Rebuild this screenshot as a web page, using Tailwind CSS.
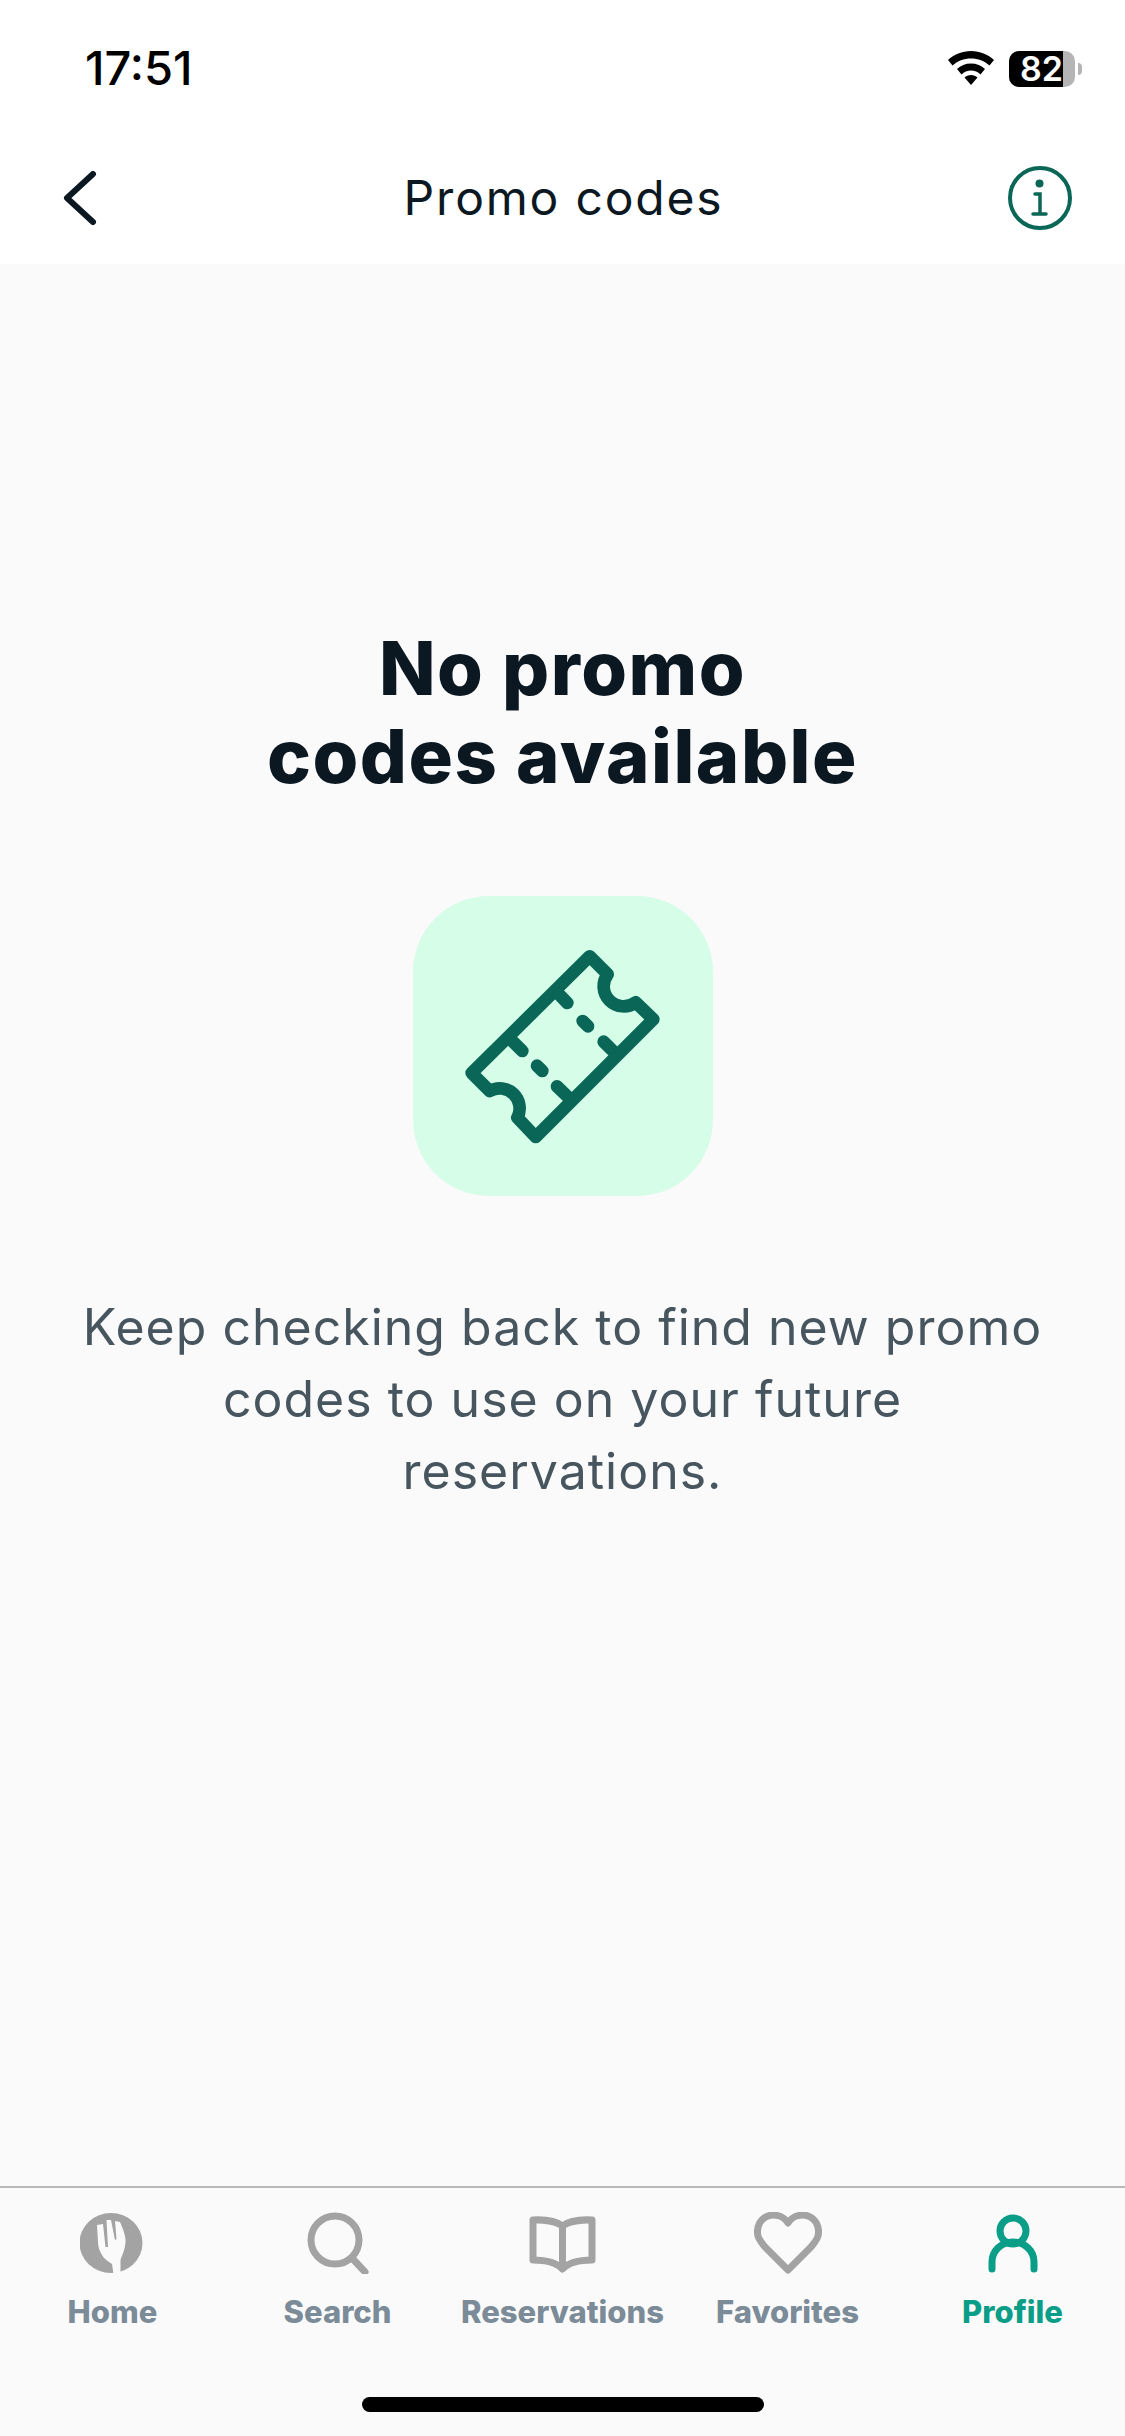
<!DOCTYPE html>
<html><head><meta charset="utf-8"><script src="https://cdn.jsdelivr.net/npm/@tailwindcss/browser@4"></script></head>
<body class="m-0">
<div class="w-[1125px] h-[2436px] flex flex-col bg-[#fafafa] font-['Inter',sans-serif] overflow-hidden">
  <div class="bg-white h-[264px] shrink-0 flex flex-col">
    <div class="h-[132px] pl-[85px] pr-[43px] flex items-start justify-between">
      <span class="mt-[41px] text-[47px] leading-[54px] font-medium text-black">17:51</span>
      <div class="mt-[51px] flex items-start gap-[15px]">
        <svg class="w-[46px] h-[34px]" viewBox="0 0 46 34"><path d="M23 0C14 0 6 3.500 0 9l4.500 5.500C9.500 10 16 7.500 23 7.500S36.500 10 41.500 14.500L46 9C40 3.500 32 0 23 0z M23 12.500c-5.500 0-10.500 2-14 5.500l4.500 5.500c2.500-2.500 6-4 9.500-4s7 1.500 9.500 4L37 18c-3.500-3.500-8.500-5.500-14-5.500z M23 24c-2.500 0-4.800 1-6.500 2.500L23 34l6.500-7.500C27.800 25 25.500 24 23 24z" fill="#000"/></svg>
        <div class="relative w-[73px] h-[36px]">
          <div class="w-[66px] h-[36px] rounded-[10px] bg-[#b5b5b5]">
            <div class="w-[54px] h-[36px] rounded-l-[10px] bg-black text-white text-[34px] leading-[36px] font-semibold text-right whitespace-nowrap">82</div>
          </div>
          <div class="absolute left-[69px] top-[12px] w-[4px] h-[12px] rounded-r-full bg-[#b5b5b5]"></div>
        </div>
      </div>
    </div>
    <div class="h-[132px] pl-[63px] pr-[53px] flex items-center justify-between">
      <div class="w-[66px]">
        <svg class="w-[34px] h-[54px]" viewBox="0 0 34 54"><path d="M30 3L4 27l26 24" fill="none" stroke="#0b1822" stroke-width="6" stroke-linecap="round" stroke-linejoin="round"/></svg>
      </div>
      <span class="-ml-[10px] text-[48px] leading-[60px] font-normal text-[#0b1822] tracking-[1.800px]">Promo codes</span>
      <svg class="w-[64px] h-[64px]" viewBox="0 0 64 64"><circle cx="32" cy="32" r="30" fill="none" stroke="#0a6657" stroke-width="4"/><circle cx="31.500" cy="17.500" r="4" fill="#0a6657"/><path d="M27 28h5v20M25 48h13" fill="none" stroke="#0a6657" stroke-width="3.500" stroke-linecap="round"/></svg>
    </div>
  </div>

  <main class="flex-1 flex flex-col items-center">
    <h1 class="mt-[360px] text-center text-[74px] leading-[88px] font-extrabold text-[#0b1822] tracking-[1.500px]">No promo<br>codes available</h1>
    <div class="mt-[96px] w-[300px] h-[300px] rounded-[76px] bg-[#d6fde8]">
      <svg class="w-full h-full" viewBox="40 47 900 900">
        <g fill="none" stroke="#0a6657" stroke-width="38" stroke-linecap="round" stroke-linejoin="round">
          <path d="M570 228L624 282A60 60 0 0 0 708 366L761 417L408 770L353 712A60 60 0 0 0 270 632L216 578Z"/>
          <path d="M476 340L503 368M340 484L368 512M612 484L640 512M472 618L505 650M549 422L565 438M412 556L428 572"/>
        </g>
      </svg>
    </div>
    <p class="mt-[95px] w-[1040px] text-center text-[50px] leading-[72px] font-normal text-[#47555f] tracking-[1px]">Keep checking back to find new promo<br>codes to use on your future<br>reservations.</p>
  </main>

  <nav class="h-[250px] shrink-0 border-t-2 border-[#b9b9b9] relative">
    <div class="grid grid-cols-5 pt-[24px]">
      <div class="flex flex-col items-center">
        <svg class="w-[66px] h-[62px]" viewBox="0 0 66 62"><ellipse cx="31" cy="31" rx="31.500" ry="30" fill="#a3a3a3"/><path d="M17 13L23 12L25.500 35L28 35L26.500 8L31 8L35 28L36.500 27L35 9L40 10C43 17 46 24 45.500 30C45 38 42 43 40.500 48L40.500 62L33.500 62L32 52C28 49 24 47 22 43C19 38 18 34 18 30Z" fill="#fafafa"/></svg>
        <span class="mt-[18px] text-[31px] leading-[40px] font-extrabold text-[#7b8b98]">Home</span>
      </div>
      <div class="flex flex-col items-center">
        <svg class="w-[62px] h-[62px]" viewBox="0 0 62 62"><circle cx="28" cy="28" r="24" fill="none" stroke="#a3a3a3" stroke-width="7"/><path d="M45 46l13 14" stroke="#a3a3a3" stroke-width="7" stroke-linecap="round"/></svg>
        <span class="mt-[18px] text-[31px] leading-[40px] font-extrabold text-[#7b8b98]">Search</span>
      </div>
      <div class="flex flex-col items-center">
        <svg class="w-[68px] h-[62px]" viewBox="0 0 68 62"><path d="M33.500 14C27 9 14 7.500 4 8V48C14 48 27 50 33.500 57C40 50 53 48 63 48V8C53 7.500 40 9 33.500 14ZM33.500 14V57" fill="none" stroke="#a3a3a3" stroke-width="7" stroke-linejoin="round"/></svg>
        <span class="mt-[18px] text-[31px] leading-[40px] font-extrabold text-[#7b8b98] whitespace-nowrap">Reservations</span>
      </div>
      <div class="flex flex-col items-center">
        <svg class="w-[68px] h-[62px]" viewBox="0 0 68 62"><path d="M34 11C29 3 20 2 14 4C6 7 2 15 4 24C5 28 8 31 11 35L34 58L57 35C60 31 63 28 64 24C66 15 62 7 54 4C48 2 39 3 34 11Z" fill="none" stroke="#a3a3a3" stroke-width="7" stroke-linejoin="round"/></svg>
        <span class="mt-[18px] text-[31px] leading-[40px] font-extrabold text-[#7b8b98]">Favorites</span>
      </div>
      <div class="flex flex-col items-center">
        <svg class="w-[54px] h-[62px]" viewBox="0 0 54 62"><circle cx="27" cy="19" r="13" fill="none" stroke="#0a9e88" stroke-width="7"/><path d="M6 57V50C6 39 15 30 27 30S48 39 48 50V57" fill="none" stroke="#0a9e88" stroke-width="7" stroke-linecap="round"/></svg>
        <span class="mt-[18px] text-[31px] leading-[40px] font-extrabold text-[#0a9e88]">Profile</span>
      </div>
    </div>
    <div class="absolute left-[362px] top-[209px] w-[402px] h-[15px] rounded-full bg-black"></div>
  </nav>
</div>
</body></html>
